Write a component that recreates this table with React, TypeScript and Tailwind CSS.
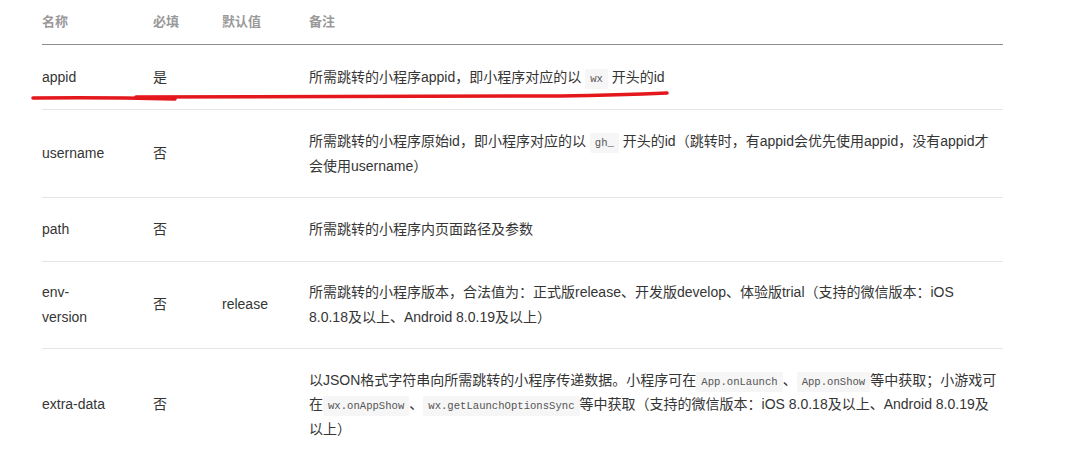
import React from "react";

const font = '"Liberation Sans", "Noto Sans CJK SC", sans-serif';

function Code({ children }: { children: React.ReactNode }) {
  return (
    <code className="rounded-[2px] bg-[#f6f6f6] px-[5px] py-[4px] text-[10.6px] leading-[14px] text-[#555] [font-family:'Liberation_Mono','DejaVu_Sans_Mono',monospace]">
      {children}
    </code>
  );
}

type Row = { name: React.ReactNode; req: string; def: string; desc: React.ReactNode; pad: string };

const rows: Row[] = [
  {
    name: "appid",
    req: "是",
    def: "",
    pad: "py-[20px]",
    desc: (
      <>
        所需跳转的小程序appid，即小程序对应的以 <Code>wx</Code> 开头的id
      </>
    ),
  },
  {
    name: "username",
    req: "否",
    def: "",
    pad: "py-[19px]",
    desc: (
      <>
        所需跳转的小程序原始id，即小程序对应的以 <Code>gh_</Code> 开头的id（跳转时，有appid会优先使用appid，没有appid才
        <br />
        会使用username）
      </>
    ),
  },
  { name: "path", req: "否", def: "", pad: "py-[19px]", desc: "所需跳转的小程序内页面路径及参数" },
  {
    name: (
      <>
        env-
        <br />
        version
      </>
    ),
    req: "否",
    def: "release",
    pad: "py-[18.5px]",
    desc: (
      <>
        所需跳转的小程序版本，合法值为：正式版release、开发版develop、体验版trial（支持的微信版本：iOS
        <br />
        8.0.18及以上、Android 8.0.19及以上）
      </>
    ),
  },
  {
    name: "extra-data",
    req: "否",
    def: "",
    pad: "py-[19px]",
    desc: (
      <>
        以JSON格式字符串向所需跳转的小程序传递数据。小程序可在<Code>App.onLaunch</Code>、<Code>App.onShow</Code>等中获取；小游戏可
        <br />
        在<Code>wx.onAppShow</Code>、<Code>wx.getLaunchOptionsSync</Code>等中获取（支持的微信版本：iOS 8.0.18及以上、Android 8.0.19及
        <br />
        以上）
      </>
    ),
  },
];

export default function App() {
  return (
    <div className="relative h-[451px] w-[1073px] overflow-hidden bg-white" style={{ fontFamily: font }}>
      <div className="pl-[42px] pt-0">
        <table className="w-[961px] table-fixed border-collapse text-[14px] leading-[24.5px] text-[#353535]">
          <colgroup>
            <col className="w-[111px]" />
            <col className="w-[69px]" />
            <col className="w-[87px]" />
            <col />
          </colgroup>
          <thead>
            <tr className="border-b border-[#8c8c8c]">
              <th className="pb-[9px] pt-[10px] text-left text-[13px] font-bold text-[#999]">名称</th>
              <th className="pb-[9px] pt-[10px] text-left text-[13px] font-bold text-[#999]">必填</th>
              <th className="pb-[9px] pt-[10px] text-left text-[13px] font-bold text-[#999]">默认值</th>
              <th className="pb-[9px] pt-[10px] text-left text-[13px] font-bold text-[#999]">备注</th>
            </tr>
          </thead>
          <tbody>
            {rows.map((r, i) => (
              <tr key={i} className="border-b border-[#e5e5e5]">
                <td className={`${r.pad} pr-2 align-middle`}>{r.name}</td>
                <td className={`${r.pad} pr-2 align-middle`}>{r.req}</td>
                <td className={`${r.pad} pr-2 align-middle`}>{r.def}</td>
                <td className={`${r.pad} pr-0 align-middle`}>{r.desc}</td>
              </tr>
            ))}
          </tbody>
        </table>
      </div>
      <svg className="pointer-events-none absolute left-0 top-0" width="1073" height="451">
        <path d="M33 98 Q100 97 175 99" stroke="#e3171c" strokeWidth="3.5" fill="none" strokeLinecap="round" />
        <path d="M136 97 L560 96 Q620 95 667 93" stroke="#e3171c" strokeWidth="3.5" fill="none" strokeLinecap="round" />
      </svg>
    </div>
  );
}
